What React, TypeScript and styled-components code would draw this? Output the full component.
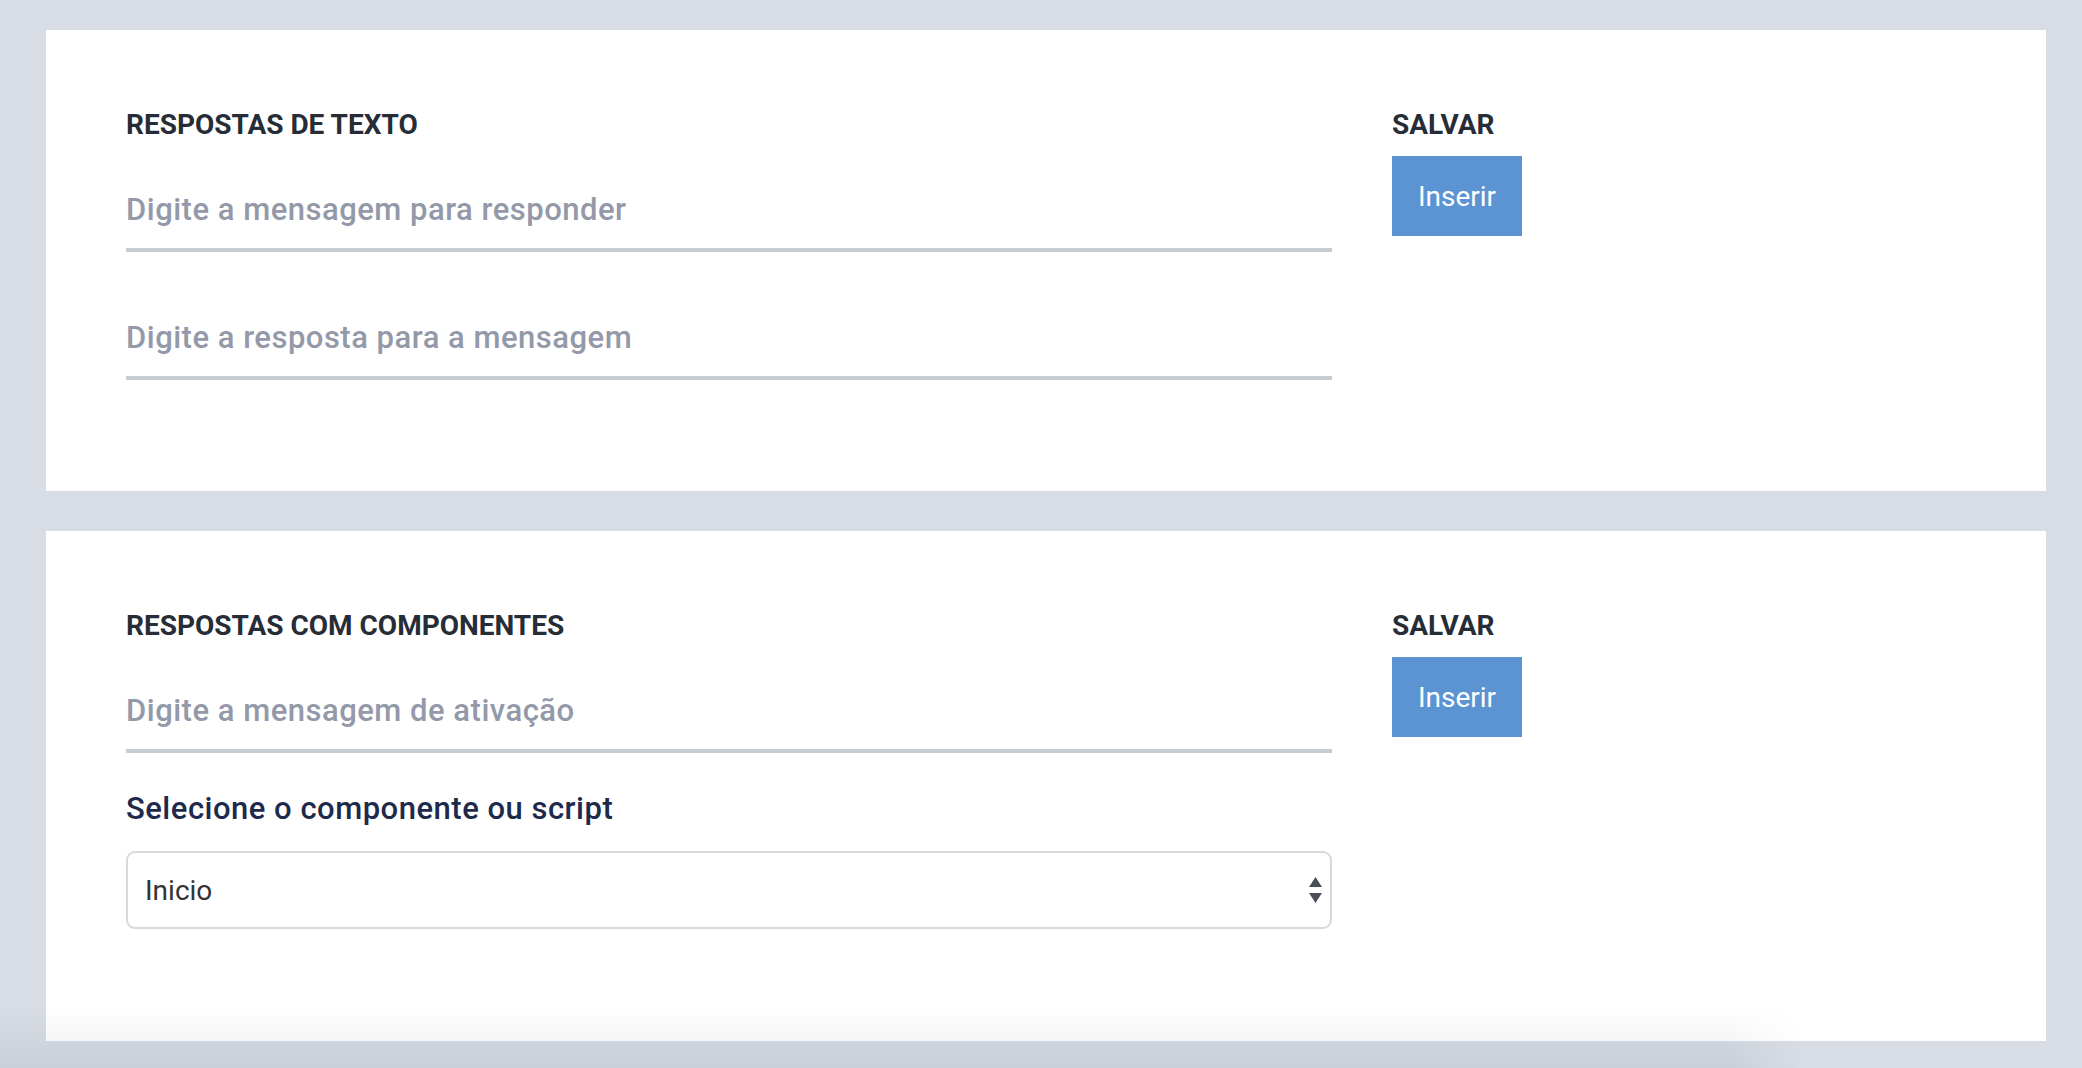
import React from "react";
import styled, { createGlobalStyle } from "styled-components";

const Global = createGlobalStyle`
  html, body { margin: 0; padding: 0; }
  body {
    background: #d8dde5;
    font-family: Roboto, "Liberation Sans", Arial, sans-serif;
    -webkit-font-smoothing: antialiased;
  }
  * { box-sizing: border-box; }
`;

const Page = styled.div`
  min-height: 1068px;
  padding: 30px 36px 27px 46px;
  display: flex;
  flex-direction: column;
  gap: 40px;
`;

const Card = styled.section<{ $bottom: number }>`
  background: #ffffff;
  padding: 78px 80px ${(p) => p.$bottom}px;
  display: grid;
  grid-template-columns: 1206px 1fr;
  column-gap: 60px;
  align-items: start;
`;

const Column = styled.div`
  display: flex;
  flex-direction: column;
`;

const Title = styled.h2`
  margin: 0;
  font-size: 28px;
  line-height: 33px;
  font-weight: 700;
  color: #272d37;
  letter-spacing: 0;
  text-transform: uppercase;
`;

const LineInput = styled.input<{ $gap: number }>`
  display: block;
  width: 100%;
  margin-top: ${(p) => p.$gap}px;
  height: 35px;
  box-sizing: content-box;
  padding: 0 0 21px 0;
  border: none;
  border-bottom: 4px solid #c7cbd4;
  outline: none;
  background: transparent;
  font-family: Roboto, "Liberation Sans", Arial, sans-serif;
  font-size: 31px;
  line-height: 35px;
  font-weight: 500;
  letter-spacing: 0.5px;
  color: #2a2f38;
  &::placeholder {
    color: #9399a8;
    opacity: 1;
  }
`;

const FieldLabel = styled.label`
  display: block;
  margin-top: 38px;
  font-size: 31px;
  line-height: 35px;
  font-weight: 500;
  color: #1d2a4b;
  letter-spacing: 0.5px;
`;

const SelectWrap = styled.div`
  position: relative;
  margin-top: 25px;
  width: 100%;
`;

const Select = styled.select`
  display: block;
  width: 100%;
  height: 78px;
  appearance: none;
  -webkit-appearance: none;
  border: 2px solid #d9d9d9;
  border-radius: 9px;
  background: #ffffff;
  padding: 0 60px 0 17px;
  font-family: Roboto, "Liberation Sans", Arial, sans-serif;
  font-size: 28px;
  color: #333333;
  outline: none;
`;

const Arrows = styled.svg`
  position: absolute;
  right: 10px;
  top: 26px;
  width: 13px;
  height: 27px;
  pointer-events: none;
`;

const SaveButton = styled.button`
  margin-top: 15px;
  width: 130px;
  height: 80px;
  border: none;
  border-radius: 0;
  background: #5b93d3;
  color: #ffffff;
  font-family: Roboto, "Liberation Sans", Arial, sans-serif;
  font-size: 28px;
  font-weight: 400;
  padding: 0;
  cursor: pointer;
`;

const BottomShade = styled.div`
  position: fixed;
  left: 0;
  bottom: 0;
  width: 1800px;
  height: 64px;
  pointer-events: none;
  background: linear-gradient(
    to bottom,
    rgba(20, 30, 60, 0) 0%,
    rgba(20, 30, 60, 0.03) 45%,
    rgba(20, 30, 60, 0.07) 100%
  );
  -webkit-mask-image: linear-gradient(to right, #000 0, #000 1730px, transparent 1800px);
  mask-image: linear-gradient(to right, #000 0, #000 1730px, transparent 1800px);
`;

const SaveColumn: React.FC = () => (
  <Column>
    <Title>Salvar</Title>
    <SaveButton type="button">Inserir</SaveButton>
  </Column>
);

export default function App() {
  return (
    <>
      <Global />
      <Page>
        <Card $bottom={111}>
          <Column>
            <Title>Respostas de texto</Title>
            <LineInput $gap={51} placeholder="Digite a mensagem para responder" />
            <LineInput $gap={68} placeholder="Digite a resposta para a mensagem" />
          </Column>
          <SaveColumn />
        </Card>
        <Card $bottom={112}>
          <Column>
            <Title>Respostas com componentes</Title>
            <LineInput $gap={51} placeholder="Digite a mensagem de ativação" />
            <FieldLabel>Selecione o componente ou script</FieldLabel>
            <SelectWrap>
              <Select defaultValue="Inicio">
                <option>Inicio</option>
              </Select>
              <Arrows viewBox="0 0 13 27">
                <polygon points="6.5,0 13,10 0,10" fill="#4a4f57" />
                <polygon points="0,16 13,16 6.5,26" fill="#4a4f57" />
              </Arrows>
            </SelectWrap>
          </Column>
          <SaveColumn />
        </Card>
      </Page>
      <BottomShade />
    </>
  );
}
